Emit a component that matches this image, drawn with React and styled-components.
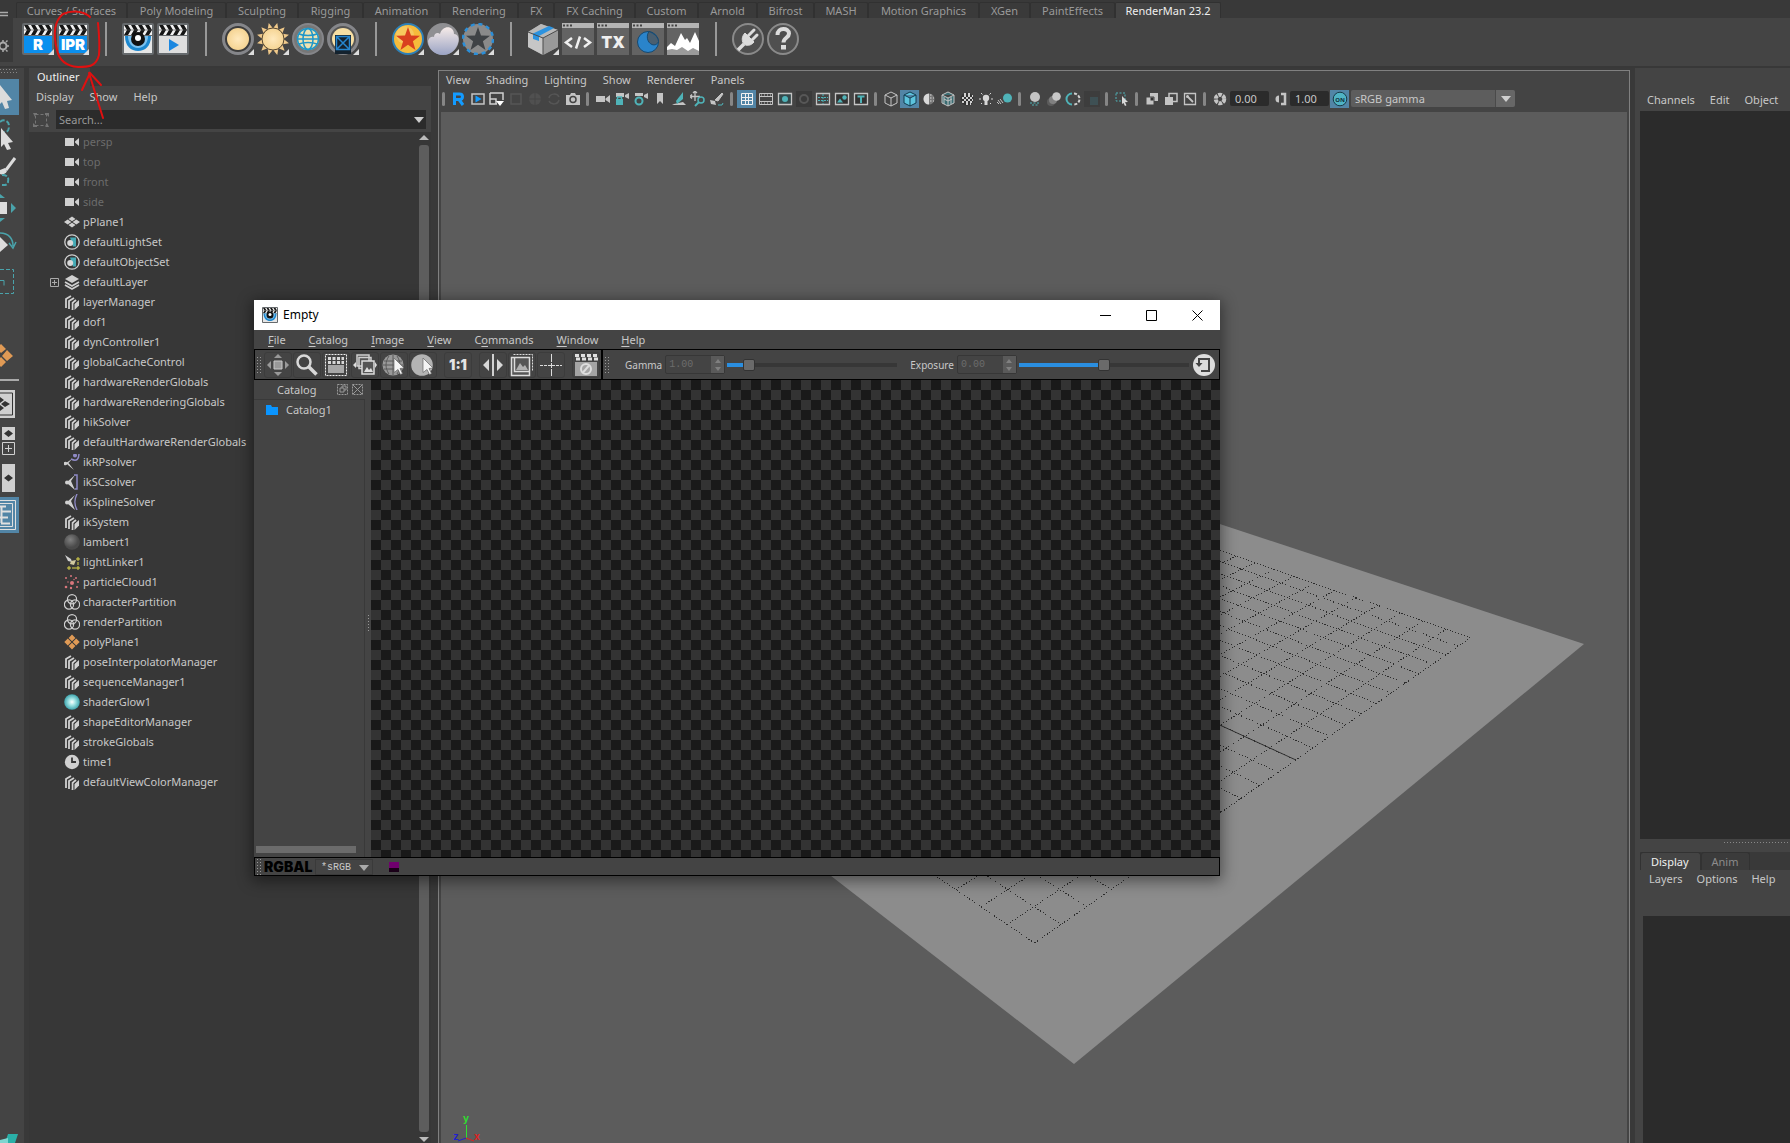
import styled, { createGlobalStyle } from "styled-components";

const GlobalStyle = createGlobalStyle`
    * {
        box-sizing: border-box;
    }

    body {
        margin: 0;
        background: #444;
        color: #c8c8c8;
        font-family: "Noto Sans", "Liberation Sans", sans-serif;
        font-size: 11px;
        line-height: 16px;
        overflow: hidden;
    }

    button, input, select {
        border: 0;
        margin: 0;
        padding: 0;
        border-radius: 0;
        background: none;
        color: inherit;
        font: inherit;
    }

    ul {
        list-style: none;
        margin: 0;
        padding: 0;
    }

    svg {
        display: block;
        flex-shrink: 0;
    }
`

/* ---------- data ---------- */

const shelfTabs = [
    { name: "Curves / Surfaces", width: 111 },
    { name: "Poly Modeling", width: 99 },
    { name: "Sculpting", width: 72 },
    { name: "Rigging", width: 65 },
    { name: "Animation", width: 77 },
    { name: "Rendering", width: 78 },
    { name: "FX", width: 36 },
    { name: "FX Caching", width: 81 },
    { name: "Custom", width: 63 },
    { name: "Arnold", width: 59 },
    { name: "Bifrost", width: 57 },
    { name: "MASH", width: 54 },
    { name: "Motion Graphics", width: 111 },
    { name: "XGen", width: 51 },
    { name: "PaintEffects", width: 85 },
    { name: "RenderMan 23.2", width: 106 },
];

const nodes = [
    { name: "persp", icon: "camera", dim: true },
    { name: "top", icon: "camera", dim: true },
    { name: "front", icon: "camera", dim: true },
    { name: "side", icon: "camera", dim: true },
    { name: "pPlane1", icon: "mesh" },
    { name: "defaultLightSet", icon: "set" },
    { name: "defaultObjectSet", icon: "set" },
    { name: "defaultLayer", icon: "layer", expand: true },
    { name: "layerManager", icon: "node" },
    { name: "dof1", icon: "node" },
    { name: "dynController1", icon: "node" },
    { name: "globalCacheControl", icon: "node" },
    { name: "hardwareRenderGlobals", icon: "node" },
    { name: "hardwareRenderingGlobals", icon: "node" },
    { name: "hikSolver", icon: "node" },
    { name: "defaultHardwareRenderGlobals", icon: "node" },
    { name: "ikRPsolver", icon: "ikRp" },
    { name: "ikSCsolver", icon: "ikSc" },
    { name: "ikSplineSolver", icon: "ikSpline" },
    { name: "ikSystem", icon: "node" },
    { name: "lambert1", icon: "lambert" },
    { name: "lightLinker1", icon: "linker" },
    { name: "particleCloud1", icon: "particles" },
    { name: "characterPartition", icon: "partition" },
    { name: "renderPartition", icon: "partition" },
    { name: "polyPlane1", icon: "poly" },
    { name: "poseInterpolatorManager", icon: "node" },
    { name: "sequenceManager1", icon: "node" },
    { name: "shaderGlow1", icon: "glow" },
    { name: "shapeEditorManager", icon: "node" },
    { name: "strokeGlobals", icon: "node" },
    { name: "time1", icon: "time" },
    { name: "defaultViewColorManager", icon: "node" },
];

/* ---------- shelf icons, 32 x 32 ---------- */

const Slats = ({ y = 2, light = "#f2f2f2", dark = "#151515" }) => (
    <g>
        <rect x="2" y={ y } width="28" height="10" fill={ light } />
        { [ 1, 8, 15, 22 ].map( x => (
            <g key={ x } fill={ dark }>
                <path d={ `M${ x + 1 } ${ y }h4l3 5h-4z` } />
                <path d={ `M${ x + 4 } ${ y + 5 }h4l-3 5h-4z` } />
            </g>
        ) ) }
        <path d={ `M2 ${ y + 5 }h28` } stroke="#555" strokeWidth=".6" />
    </g>
)

const Corner = () => <path d="M32 26v6h-6z" fill="#ddd" />

const Clapper = ({ children, body }) => (
    <>
        <rect width="32" height="32" rx="2" fill="#666a6d" />
        <Slats />
        <rect x="2" y="13" width="28" height="17" fill={ body } />
        { children }
    </>
)

const AppWindow = ({ children }) => (
    <>
        <rect width="32" height="32" fill="#636363" />
        <rect width="32" height="5" fill="#b4b4b4" />
        <path d="M1 2.500h2M4.500 2.500h2M8 2.500h2" stroke="#444" strokeWidth="2" />
        { children }
    </>
)

const star = "M16 4l3 8.500 9 .3-7.100 5.500 2.600 8.700L16 21.800 8.500 27l2.600-8.700L4 12.800l9-.3z";

const shelfIcons = {
    render: (
        <>
            <Clapper body="#0a8fee">
                <text x="16" y="27" textAnchor="middle" fontSize="15" fontWeight="900" fontFamily="Inter" fill="#fff">R</text>
            </Clapper>
            <Corner />
        </>
    ),
    ipr: (
        <>
            <Clapper body="#0a8fee">
                <text x="16" y="27" textAnchor="middle" fontSize="15" fontWeight="900" fontFamily="Inter" fill="#fff">IPR</text>
            </Clapper>
            <Corner />
        </>
    ),
    it: (
        <Clapper body="#e6e6e6">
            <path d="M3 13h26c0 10-6 15-13 15S3 23 3 13z" fill="#1b87cf" />
            <path d="M6 13h20c0 7-4 12-10 12S6 20 6 13z" fill="#7cc1ee" />
            <circle cx="16" cy="16" r="7" fill="#111" />
            <circle cx="16" cy="15" r="3" fill="#fff" />
        </Clapper>
    ),
    play: (
        <Clapper body="#dedede">
            <path d="M12 16l10 6-10 6z" fill="#1b87e0" />
        </Clapper>
    ),
    light: (
        <>
            <circle cx="16" cy="16" r="14.500" fill="#3c3c3c" stroke="#85868a" strokeWidth="3" />
            <circle cx="16" cy="16" r="11" fill="url(#lamp)" />
            <Corner />
        </>
    ),
    sun: (
        <>
            { [ 0, 30, 60, 90, 120, 150, 180, 210, 240, 270, 300, 330 ].map( a => (
                <path key={ a } d="M13.500 5L16-.5 18.500 5z" fill="#f0c98a" transform={ `rotate(${ a + 15 } 16 16)` } />
            ) ) }
            <circle cx="16" cy="16" r="11" fill="url(#lamp)" stroke="#5a4a33" />
            <Corner />
        </>
    ),
    dome: (
        <>
            <circle cx="16" cy="16" r="15" fill="#777" stroke="#85868a" strokeWidth="2" />
            <circle cx="16" cy="16" r="11" fill="#efe2b0" />
            <g fill="none" stroke="#1f97c9" strokeWidth="1.500">
                <circle cx="16" cy="16" r="10.500" />
                <ellipse cx="16" cy="16" rx="5" ry="10.500" />
                <path d="M7 11c5 2 13 2 18 0M7 21c5-2 13-2 18 0M5.500 16h21" />
            </g>
        </>
    ),
    portal: (
        <>
            <circle cx="16" cy="16" r="14.500" fill="#555" stroke="#85868a" strokeWidth="3" />
            <circle cx="16" cy="16" r="11" fill="#f7dfa3" />
            <rect x="8" y="12" width="16" height="19" fill="#14222e" />
            <path d="M9.500 13.500h13v13h-13zl13 13M22.500 13.500l-13 13" fill="none" stroke="#2686cf" strokeWidth="1.500" />
            <Corner />
        </>
    ),
    star: (
        <>
            <circle cx="16" cy="16" r="15" fill="#f6bb3b" stroke="#2d80b8" strokeWidth="2" />
            <circle cx="13" cy="12" r="9" fill="#f9d276" opacity=".6" />
            <path d={ star } fill="#d9401f" />
            <Corner />
        </>
    ),
    cloud: (
        <>
            <circle cx="16" cy="16" r="16" fill="#8f8f92" />
            <path d="M1 18c1-4 4-5 6-4 0-4 4-5 6-3 2-9 14-9 14 0 4 0 5 4 4.500 7C30 26 24 32 16 32S1 26 1 18z" fill="url(#cloud)" />
            <Corner />
        </>
    ),
    gearStar: (
        <>
            <circle cx="16" cy="16" r="15" fill="#8a8a8a" stroke="#2b8fd9" strokeWidth="2.500" strokeDasharray="4 3.850" />
            <path d={ star } fill="#3f4245" />
            <Corner />
        </>
    ),
    box: (
        <>
            <path d="M1 9l13-8 17 6v17l-15 8L1 24z" fill="#9b9b9b" />
            <path d="M1 9l15 6v17L1 24z" fill="#c6c6c6" />
            <path d="M16 15l15-8v17l-15 8z" fill="#9a9a9a" />
            <path d="M1 9l13-8 17 6-15 8z" fill="#b9b9b9" />
            <path d="M6 10.500l16-7.500 5 2-15 8v5l-6-2z" fill="#2c93e0" />
            <path d="M16 15v17M1 9l15 6 15-8" fill="none" stroke="#4b4b4b" />
            <Corner />
        </>
    ),
    code: (
        <AppWindow>
            <path d="M10 15l-6 4.500 6 4.500M22 15l6 4.500-6 4.500M18 13.500l-4 12" fill="none" stroke="#f0f0f0" strokeWidth="2.500" />
        </AppWindow>
    ),
    tx: (
        <AppWindow>
            <text x="16" y="24.500" textAnchor="middle" fontSize="16" fontWeight="900" fontFamily="Inter" fill="#efefef">TX</text>
        </AppWindow>
    ),
    moon: (
        <AppWindow>
            <circle cx="16" cy="19" r="10.500" fill="#2a84cb" stroke="#174970" />
            <path d="M17 8.500c5 2 9 5 9.500 10-1 3-4 4-6.500 3-5-2-6-9-3-13z" fill="#4a5f70" stroke="#174970" />
        </AppWindow>
    ),
    graph: (
        <AppWindow>
            <path d="M0 24l4-4 4 3 6-13 4 7 2-2 3 5 5-11 4 9v12H0z" fill="#fff" />
            <path d="M0 27l5-1 5 1 5-3 6 4 5-3 6 3v4H0z" fill="#9a9a9a" />
        </AppWindow>
    ),
    plug: (
        <>
            <circle cx="16" cy="16" r="15" fill="#4f4f4f" stroke="#8a8a8a" strokeWidth="2" />
            <path d="M13 10l9 9c-3 4-8 4-10 2s-3-7 1-11z" fill="#dcdcdc" stroke="#dcdcdc" />
            <path d="M16 13l6-6M20 17l5-5" stroke="#dcdcdc" strokeWidth="3" strokeLinecap="round" />
            <path d="M12 21l-6 6" stroke="#dcdcdc" strokeWidth="3.500" />
        </>
    ),
    help: (
        <>
            <circle cx="16" cy="16" r="15" fill="#4f4f4f" stroke="#8a8a8a" strokeWidth="2" />
            <path d="M10.500 12c0-8 11.500-7.500 11.500-1.500 0 4.500-5.500 4-5.500 9" fill="none" stroke="#dcdcdc" strokeWidth="4" />
            <rect x="14" y="22" width="5" height="4.500" fill="#dcdcdc" />
        </>
    ),
};

const shelfGroups = [
    [ "render", "ipr" ],
    [ "it", "play" ],
    [ "light", "sun", "dome", "portal" ],
    [ "star", "cloud", "gearStar" ],
    [ "box", "code", "tx", "moon", "graph" ],
    [ "plug", "help" ],
];

/* ---------- outliner icons, 16 x 16 ---------- */

const nodeIcons = {
    camera: <path d="M1 4h9v8H1zM11 7.500L15 4v8l-4-3.500z" fill="#d0d0d0" />,
    mesh: <path d="M8 2.500L11.500 5 8 7.300 4.500 5zM3.700 5.500l3.700 2.500-3.700 2.500L0 8zM12.300 5.500L16 8l-3.700 2.500L8.600 8zM8 8.700l3.500 2.300L8 13.500 4.500 11z" fill="#d0d0d0" />,
    set: (
        <>
            <circle cx="8" cy="8" r="7.200" fill="none" stroke="#d0d0d0" strokeWidth="1.300" />
            <path d="M6 3.500h6v9H9z" fill="#45aab5" />
            <circle cx="6.200" cy="9" r="3" fill="#d8d8d8" />
        </>
    ),
    layer: (
        <>
            <path d="M8 1l7 4-7 4-7-4z" fill="#d0d0d0" />
            <path d="M1 8l7 4 7-4M1 11l7 4 7-4" fill="none" stroke="#d0d0d0" strokeWidth="1.700" />
        </>
    ),
    node: (
        <>
            <path d="M2 14V5l5-3M5 15V7l5-3M8.500 16V9l3.500-3" fill="none" stroke="#d0d0d0" strokeWidth="1.800" />
            <path d="M10.500 10l4.500-4v5.500L10.500 16z" fill="#d0d0d0" />
            <path d="M3.500 8v6M6.800 8v7M10 9.500l2-1.500" stroke="#373737" strokeWidth=".8" />
        </>
    ),
    ikRp: (
        <>
            <path d="M2 9l6-4-3.500 4L10 16l-6-5z" fill="#d0d0d0" />
            <circle cx="1.500" cy="9.500" r="1.800" fill="#d0d0d0" />
            <path d="M7 5c6 3 8 0 8-6" fill="none" stroke="#8f8ac6" strokeWidth="1.500" />
            <circle cx="11" cy="1.500" r="2" fill="#8f8ac6" />
        </>
    ),
    ikSc: (
        <>
            <path d="M3 8l8-7-4 6 4 9-7-6z" fill="#d0d0d0" />
            <circle cx="3" cy="8.500" r="2" fill="#d0d0d0" />
            <path d="M10 1h3v14h-2" fill="none" stroke="#8f8ac6" strokeWidth="1.500" />
        </>
    ),
    ikSpline: (
        <>
            <path d="M3 8l8-7-4 6 4 9-7-6z" fill="#d0d0d0" />
            <circle cx="3" cy="8.500" r="2" fill="#d0d0d0" />
            <path d="M13 0c-3 6-3 10 0 16" fill="none" stroke="#8f8ac6" strokeWidth="1.500" />
        </>
    ),
    lambert: <circle cx="8" cy="8" r="7.800" fill="url(#lambert)" />,
    linker: (
        <>
            <path d="M1 1l6 4 1 3-4-1z" fill="#d0d0d0" />
            <path d="M7 7l5-1-2 5-4-1z" fill="#cfc8a0" />
            <path d="M4 13h2v2H4zM13 13h2v2h-2zM13 4h2v2h-2z" fill="none" stroke="#d8d24a" />
            <path d="M8 14h4M14 8v3" stroke="#d8d24a" />
        </>
    ),
    particles: (
        <g fill="#d9767c">
            <circle cx="8" cy="9" r="2" /><circle cx="2" cy="4" r="1" /><circle cx="7" cy="2" r="1" />
            <circle cx="12" cy="4" r="1" /><circle cx="2" cy="13" r="1.300" /><circle cx="14" cy="8" r="1" />
            <circle cx="13" cy="13" r="1" /><circle cx="7" cy="14" r="1.200" /><circle cx="4" cy="8" r=".7" /><circle cx="10" cy="5.500" r=".7" />
        </g>
    ),
    partition: (
        <g fill="none" stroke="#d0d0d0" strokeWidth="1.200">
            <circle cx="8" cy="5.200" r="4.600" /><circle cx="5" cy="10.500" r="4.600" /><circle cx="11" cy="10.500" r="4.600" />
        </g>
    ),
    poly: <path d="M8 .5l3.400 3.400L8 7.300 4.600 3.900zM3.800 4.600l3.500 3.400-3.500 3.500L.3 8zM12.200 4.600L15.700 8l-3.500 3.500L8.700 8zM8 8.700l3.400 3.400L8 15.500l-3.400-3.400z" fill="#e09a55" />,
    glow: <circle cx="8" cy="8" r="7.800" fill="url(#glow)" />,
    time: (
        <>
            <circle cx="8" cy="8" r="7.200" fill="#d0d0d0" />
            <path d="M8 3.500V8h4" fill="none" stroke="#373737" strokeWidth="1.800" />
        </>
    ),
};

/* ---------- viewport toolbar icons, 16 x 16 ---------- */

const cube = "M8 1l6 3v8l-6 3-6-3V4zM2 4l6 3 6-3M8 7v8";

const viewIcons = {
    r: <path d="M3.500 14V3h5c4 0 4 5.500 0 5.500H4M8 8.500l4 5.500" fill="none" stroke="#139bff" strokeWidth="3" />,
    playBox: <><path d="M2 3h12v10H2z" fill="none" stroke="#c4c4c4" strokeWidth="1.500" /><path d="M5.500 4.500l6 3.500-6 3.500z" fill="#139bff" /></>,
    layout: <><path d="M1 2h13v7M1 2v11h7M1 8h6v5" fill="none" stroke="#d0d0d0" strokeWidth="1.500" /><path d="M7 10h8l-4 5z" fill="#fff" /></>,
    dimCrop: <path d="M3 3h10v10H3z" fill="none" stroke="#565656" strokeWidth="1.500" />,
    dimGlobe: <><circle cx="8" cy="8" r="6" fill="#505050" /><path d="M2 8h12M8 2v12" stroke="#444" /></>,
    dimSync: <path d="M3 7c1-5 8-5 10-1M13 9c-1 5-8 5-10 1" fill="none" stroke="#565656" strokeWidth="1.500" />,
    photo: <><path d="M1 4h4l1-2h4l1 2h4v10H1z" fill="#c4c4c4" /><circle cx="8" cy="8.500" r="3" fill="#c4c4c4" stroke="#444" strokeWidth="1.500" /></>,
    cam: <path d="M1 5h9v6H1zM10.500 7.500L15 4v8l-4.500-3z" fill="#c4c4c4" />,
    camLock: <><path d="M2 2h8v4H2zM11 4l4-2v6l-4-2z" fill="#c4c4c4" /><path d="M2 8h7v6H2z" fill="#4fb3b8" /><path d="M3.500 8V6h4v2" fill="none" stroke="#4fb3b8" strokeWidth="1.500" /></>,
    camGear: <><path d="M2 2h8v3H2zM11 4l4-2v6l-4-2z" fill="#c4c4c4" /><circle cx="6" cy="10" r="3.500" fill="none" stroke="#4fb3b8" strokeWidth="2" /></>,
    mark: <path d="M5 2h6v11L8 10l-3 3z" fill="#c4c4c4" />,
    plane: <><path d="M3 13l9-2 3 3H1z" fill="#c4c4c4" /><path d="M5 10l7-9v7l-6 5z" fill="#4fb3b8" /></>,
    panZoom: <><path d="M5 1v9M1 5.500h9M5 0l2 2M5 0L3 2M0 5.500l2-2M0 5.500l2 2" stroke="#c4c4c4" strokeWidth="1.300" fill="none" /><circle cx="11" cy="9" r="3" fill="#444" stroke="#4fb3b8" strokeWidth="1.500" /><path d="M9 11l-4 4" stroke="#4fb3b8" strokeWidth="2" /></>,
    pencil: <><path d="M13 2l1 1-5 7-3-1z" fill="#c4c4c4" stroke="#c4c4c4" /><path d="M1 9l5 1 1 4-5-1z" fill="#c4c4c4" /><path d="M9 14h4l1-2" stroke="#4fb3b8" fill="none" /></>,
    grid: <path d="M2.500 2.500h11v11h-11zM2.500 6.500h11M2.500 9.500h11M6.500 2.500v11M9.500 2.500v11" fill="none" stroke="#f0f0f0" />,
    film: <><path d="M1.500 2.500h13v11h-13zM1.500 5.500h13M1.500 10.500h13" fill="none" stroke="#c4c4c4" /><path d="M3 4h10M3 12h10" stroke="#c4c4c4" strokeDasharray="1 2" /></>,
    gate: <><path d="M1.500 2.500h13v11h-13z" fill="#34494b" stroke="#c4c4c4" strokeWidth="1.300" /><circle cx="8" cy="8" r="3" fill="#4fb3b8" /></>,
    dimGate: <><rect width="16" height="16" fill="#3a3a3a" /><circle cx="8" cy="8" r="4" fill="none" stroke="#575757" strokeWidth="2" /></>,
    chart: <><path d="M1.500 2.500h13v11h-13z" fill="none" stroke="#c4c4c4" strokeWidth="1.300" /><path d="M3 6.500h10M3 9.500h10M8 3v10" stroke="#4fb3b8" strokeDasharray="2 1" /></>,
    safe: <><path d="M1.500 2.500h13v11h-13z" fill="#333" stroke="#c4c4c4" strokeWidth="1.300" /><path d="M3 11.500l3-4 3 4z" fill="#4fb3b8" /><circle cx="10.500" cy="6.500" r="2.200" fill="#4fb3b8" /></>,
    title: <><path d="M1.500 2.500h13v11h-13z" fill="#333" stroke="#c4c4c4" strokeWidth="1.300" /><path d="M4.500 5.500h7M8 6v6" stroke="#4fb3b8" strokeWidth="2" /></>,
    wire: <path d={ cube } fill="none" stroke="#c4c4c4" />,
    shaded: <path d={ cube } fill="#5cc3dd" stroke="#123d50" />,
    half: <><circle cx="8" cy="8" r="5.500" fill="#777" /><path d="M8 2.500a5.500 5.500 0 0 0 0 11z" fill="#d8d8d8" /><path d="M9 4h3M9 7h4M9 10h4" stroke="#d8d8d8" strokeDasharray="1.500 1.500" /></>,
    texCube: <><path d={ cube } fill="#3a6c72" stroke="#c4c4c4" /><path d="M4 6v7M11 6v7M4 8l4 2 4-2" stroke="#c4c4c4" fill="none" /></>,
    checker: (
        <g stroke="#d0d0d0" strokeWidth="2" strokeDasharray="2 2">
            <circle cx="8" cy="8" r="6.500" fill="#333" stroke="none" />
            <path d="M5 3h8M3 7h12M5 11h8M3 5h12M3 9h12M7 13h4" strokeDashoffset="0" opacity="0" />
            <path d="M5 3h7M3 7h11M3 11h11" />
            <path d="M3 5h11M3 9h11M5 13h7" strokeDashoffset="2" />
        </g>
    ),
    bulb: <><circle cx="8" cy="7" r="3.200" fill="#d8d8d8" /><path d="M6.500 9h3v5h-3z" fill="#d8d8d8" /><path d="M1 8h2M13 8h2M3 2l1.500 1.500M13 2l-1.500 1.500M3 13l1-1M13 13l-1-1" stroke="#d8d8d8" /></>,
    motion: <><circle cx="10.500" cy="7" r="4.500" fill="#4fb3b8" /><path d="M1 9l3 4M3 8l3 4M0 11l2 2" stroke="#c4c4c4" /></>,
    ao: <><circle cx="8" cy="6" r="5" fill="#c4c4c4" /><path d="M3 12h10M5 14h7" stroke="#4fb3b8" strokeDasharray="2 1.500" /></>,
    blur: <><circle cx="5" cy="11" r="4" fill="#5c5c5c" /><circle cx="7" cy="9" r="4" fill="#808080" /><circle cx="10.500" cy="5.500" r="4.300" fill="#c8c8c8" /></>,
    aa: <><path d="M7 2.500a5.500 5.500 0 0 0 0 11" fill="none" stroke="#4fb3b8" strokeWidth="2" /><path d="M9 2.500a5.500 5.500 0 0 1 0 11" fill="none" stroke="#d0d0d0" strokeWidth="2" strokeDasharray="3 1.500" /></>,
    dimXray: <><rect width="16" height="16" fill="#3d3d3d" /><rect x="6" y="6" width="8" height="8" fill="#3e5054" /></>,
    isolate: <><path d="M2 2h9v8H2z" fill="none" stroke="#4fb3b8" strokeDasharray="2 1.500" /><path d="M8 5l6 6-3 .3 1.500 3-1.500.7-1.500-3L8 13z" fill="#d8d8d8" /></>,
    front: <><path d="M6 2h8v8H6z" fill="#c4c4c4" /><path d="M2 6h8v8H2z" fill="#c4c4c4" stroke="#444" /><path d="M6.500 6.500h3v3h-3z" fill="#333" /></>,
    back: <><path d="M6 2.500h8v8H6z" fill="none" stroke="#c4c4c4" strokeWidth="1.500" /><path d="M2 6h8v8H2z" fill="#c4c4c4" /></>,
    pick: <><path d="M2.500 2.500h11v11h-11z" fill="none" stroke="#c4c4c4" strokeWidth="1.300" /><path d="M5 5l6 6" stroke="#c4c4c4" strokeWidth="1.800" /><circle cx="5.500" cy="5.500" r="1.500" fill="#c4c4c4" /></>,
    aperture: <><circle cx="8" cy="8" r="4.300" fill="none" stroke="#c4c4c4" strokeWidth="4" strokeDasharray="3.600 .9" /></>,
    contrast: <><path d="M9 3h4v10H9" fill="none" stroke="#c4c4c4" strokeWidth="2.500" /><path d="M7 4.500a3.500 3.500 0 0 0 0 7z" fill="#c4c4c4" /></>,
};

const viewGroups = [
    [ "r", "playBox", "layout", "dimCrop", "dimGlobe", "dimSync", "photo" ],
    [ "cam", "camLock", "camGear", "mark", "plane", "panZoom", "pencil" ],
    [ "grid", "film", "gate", "dimGate", "chart", "safe", "title" ],
    [ "wire", "shaded", "half", "texCube", "checker", "bulb", "motion" ],
    [ "ao", "blur", "aa", "dimXray" ],
    [ "isolate" ],
    [ "front", "back", "pick" ],
];

/* ---------- render window icons, 24 x 24 ---------- */

const cursor = <path d="M12 5l10 10-4 .5 2.500 5-2 1-2.500-5-4 3z" fill="#f4f4f4" stroke="#666" strokeWidth=".7" />;

const itIcons = {
    pan: <><path d="M8 8h8v8H8z" fill="#999" stroke="#c9c9c9" /><path d="M12 1l4 4H8zM12 23l4-4H8zM1 12l4-4v8zM23 12l-4-4v8z" fill="#999" /></>,
    zoom: <><circle cx="9" cy="9" r="6.500" fill="none" stroke="#d8d8d8" strokeWidth="2.500" /><path d="M13.500 13.500l8 8" stroke="#d8d8d8" strokeWidth="3.500" /></>,
    crop: <><path d="M1.500 1.500h21v21h-21z" fill="none" stroke="#eee" strokeDasharray="2 1" /><path d="M4 12h16v8H4z" fill="#a8a8a8" /><path d="M4 9.500h16M4 5.500h16" stroke="#d8d8d8" strokeWidth="3" strokeDasharray="3 1.500" /></>,
    images: <><path d="M4 2h12v11H4zM6 4.500h12v11H6z" fill="#555" stroke="#cfcfcf" strokeWidth="1.500" /><path d="M9 8h12v13H9z" fill="#555" stroke="#dcdcdc" strokeWidth="1.500" /><path d="M11 19l3-5 2 3 2-2 2 4z" fill="#ddd" /><path d="M0 12l3-3v6zM24 12l-2-3v6z" fill="#ddd" /></>,
    globe: <><circle cx="11" cy="12" r="10.500" fill="#999" /><path d="M2 8h18M1 12h20M2 16h18M11 2v20M7 3c-4 6-4 12 0 18M15 3c4 6 4 12 0 18" fill="none" stroke="#5a5a5a" />{ cursor }</>,
    sphere: <><circle cx="11" cy="12" r="10.800" fill="#b4b4b4" />{ cursor }</>,
    compare: <><path d="M12 1v22" stroke="#e0e0e0" strokeWidth="1.800" /><path d="M8 6v12l-6-6zM16 6v12l6-6z" fill="#d8d8d8" /></>,
    frame: <><path d="M3.500 1.500h19v17" fill="none" stroke="#ddd" strokeDasharray="2 1" /><path d="M1.500 4.500h18v18h-18zM4.500 4.500h15v14h-15z" fill="#555" stroke="#ddd" strokeWidth="1.500" /><path d="M6 17l4-7 3 4 2-2 3 5z" fill="#b0b0b0" /></>,
    cross: <><path d="M12.500 1v22" stroke="#ddd" strokeDasharray="8 1 5 1" /><path d="M1 12.500h22" stroke="#ddd" strokeDasharray="3 1" /></>,
    stop: <><path d="M1 9h22v14H1z" fill="#a4a4a4" /><path d="M1 2.500h22M2 6h22" stroke="#e0e0e0" strokeWidth="3" strokeDasharray="4 2" /><circle cx="12" cy="16" r="5" fill="none" stroke="#ddd" strokeWidth="2" /><path d="M9 19.500l6-7" stroke="#ddd" strokeWidth="2" /></>,
};

/* ---------- perspective grid ---------- */

// s runs away from the right edge, t runs towards the bottom corner, both 0..24
const project = ( s, t ) => {
    const w = 1 + 0.0135 * s - 0.01383 * t;
    return [ ( 1470.4 - 4.6 * s - 32.47 * t ) / w, ( 637.6 + 0.11 * s - 0.314 * t ) / w ];
}

const gridLine = ( from, to ) => `M${ project( ...from ).join( " " ) }L${ project( ...to ).join( " " ) }`;

const steps = Array.from( { length: 25 }, ( _, i ) => i );

const Scene = () => (
    <SceneSvg viewBox="441 112 1186 1031" preserveAspectRatio="xMinYMin slice">
        <path d="M1584 644L1074 1064 600 697 1050 468z" fill="#8c8c8c" />
        <g stroke="#2c2c2c" strokeWidth="1" strokeDasharray="1 2" shapeRendering="crispEdges">
            { steps.map( i => <path key={ `s${ i }` } d={ gridLine( [ i, 0 ], [ i, 24 ] ) } /> ) }
            { steps.map( i => <path key={ `t${ i }` } d={ gridLine( [ 0, i ], [ 24, i ] ) } /> ) }
        </g>
        <path d={ gridLine( [ 0, 12 ], [ 24, 12 ] ) } stroke="#333" strokeWidth="1" />
        <path d="M466.500 1138v-13" stroke="#2fe02f" />
        <path d="M466 1138l-8 3" stroke="#2020d0" />
        <path d="M466 1138l8 3" stroke="#e02020" />
        <g fontFamily="Liberation Mono" fontSize="10" fontWeight="700">
            <text x="463" y="1122" fill="#2fe02f">y</text>
            <text x="453" y="1140" fill="#2020d0">z</text>
            <text x="474" y="1140" fill="#e02020">x</text>
        </g>
    </SceneSvg>
)

/* ---------- parts ---------- */

const Defs = () => (
    <HiddenSvg aria-hidden="true">
        <defs>
            <radialGradient id="lamp"><stop offset="0" stopColor="#ffe9bd" /><stop offset="1" stopColor="#f5d493" /></radialGradient>
            <radialGradient id="glow"><stop offset="0" stopColor="#fff" /><stop offset=".4" stopColor="#a5e6e6" /><stop offset="1" stopColor="#3fa5ae" /></radialGradient>
            <radialGradient id="lambert" cx=".4" cy=".35"><stop offset="0" stopColor="#808080" /><stop offset="1" stopColor="#4a4a4a" /></radialGradient>
            <linearGradient id="cloud" x2="0" y2="1"><stop offset="0" stopColor="#f6ebe8" /><stop offset="1" stopColor="#9aa3c4" /></linearGradient>
        </defs>
    </HiddenSvg>
)

const Shelf = () => (
    <ShelfBar>
        <ShelfMenu>
            <svg width="12" height="62" viewBox="0 0 12 62">
                <path d="M0 12.500h8M0 15.500h8" stroke="#aaa" strokeWidth="1.500" />
                <circle cx="3" cy="46" r="3.500" fill="none" stroke="#aaa" strokeWidth="2" />
                <path d="M3 40v2M3 50v2M7 46h2M6 42l1.500-1.500M6 50l1.500 1.500" stroke="#aaa" strokeWidth="1.500" />
            </svg>
        </ShelfMenu>
        <ShelfMain>
            <TabRow>
                { shelfTabs.map( ( tab, i ) => (
                    <ShelfTab key={ tab.name } $width={ tab.width } $active={ i === shelfTabs.length - 1 }>{ tab.name }</ShelfTab>
                ) ) }
            </TabRow>
            <ShelfIcons>
                { shelfGroups.map( group => (
                    <ShelfGroup key={ group[ 0 ] }>
                        { group.map( name => (
                            <button key={ name } aria-label={ name }>
                                <svg width="32" height="32" viewBox="0 0 32 32">{ shelfIcons[ name ] }</svg>
                            </button>
                        ) ) }
                    </ShelfGroup>
                ) ) }
            </ShelfIcons>
        </ShelfMain>
    </ShelfBar>
)

const Tools = () => (
    <Toolbox>
        <svg width="24" height="1075" viewBox="0 68 24 1075">
            <path d="M0 69.500h18M1 72.500h18" stroke="#888" strokeDasharray="1 2" />
            <rect y="79" width="19" height="36" fill="#5285a6" />
            <path d="M0 85l12 15-5 1 2 7-4 1-3-7-2 2z" fill="#dcdcdc" />
            <path d="M0 122c3-3 9-2 9 4s-3 6-5 6" fill="none" stroke="#4aa3ab" strokeWidth="2" strokeDasharray="5 2" />
            <path d="M1 128l12 14-5 1 3 6-4 1-3-6-3 3z" fill="#dcdcdc" />
            <path d="M15 158l-9 12" stroke="#dcdcdc" strokeWidth="3" />
            <path d="M0 170l5-2 2 3c-1 3-5 4-7 3z" fill="#dcdcdc" />
            <path d="M2 175c6 0 7 3 6 7s-4 3-8 3" fill="none" stroke="#4aa3ab" strokeWidth="2" strokeDasharray="5 2" />
            <path d="M0 202h7v12H0z" fill="#dcdcdc" />
            <path d="M11 203l5 5-5 5zM0 194l5 4H0zM0 222l5-4H0z" fill="#4aa3ab" />
            <path d="M0 237l8 8-8 7z" fill="#dcdcdc" />
            <path d="M0 233c9 0 13 6 13 13M9 243l4 5 3-6" fill="none" stroke="#4aa3ab" strokeWidth="1.500" />
            <path d="M0 269.500h13.500v24H0" fill="none" stroke="#4aa3ab" strokeDasharray="4 2" />
            <path d="M0 280.500h4v5" fill="none" stroke="#4aa3ab" />
            <path d="M1 344l5 5-5 4-1-1v-7zM7 350l6 6-6 5-5-5zM1 357l5 5-5 5-1-1v-8z" fill="#e09a55" />
            <path d="M0 380h19" stroke="#aaa" strokeWidth="2" />
            <path d="M0 390h15v28H0z" fill="#d0d0d0" />
            <path d="M0 393h12.500v22H0" fill="none" stroke="#333" />
            <path d="M0 397l4 3-4 3zM5 401l5 3-5 3-4-3zM0 405l4 3-4 3z" fill="#333" />
            <path d="M2 427h13v13H2zM2 464h13v28H2z" fill="#d0d0d0" />
            <path d="M4 433.500l4.500-3.500 4.500 3.500-4.500 3.500zM4 478l4.500-3.500L13 478l-4.500 3.500z" fill="#333" />
            <path d="M2.500 442.500h12v12h-12zM8.500 445v7M5 448.500h7" fill="none" stroke="#d0d0d0" />
            <rect y="497" width="19" height="36" fill="#5285a6" />
            <path d="M0 500.500h15.500v29H0M0 503.500h12.500v23H0" fill="none" stroke="#e0e0e0" />
            <path d="M0 506.500h6M1 511.500h10M0 517.500h8M1 523.500h9M1.500 507v16" fill="none" stroke="#e0e0e0" strokeWidth="2" />
            <path d="M8 1134h10l-3 9H5z" fill="#2ab0a8" />
            <path d="M0 1140l8-2v5H0z" fill="#7fd6d0" />
        </svg>
    </Toolbox>
)

const Outliner = () => (
    <OutlinerPanel>
        <PanelTabs><PanelTab $active>Outliner</PanelTab></PanelTabs>
        <MenuRow $height={ 21 }>
            <button>Display</button>
            <button>Show</button>
            <button>Help</button>
        </MenuRow>
        <SearchRow>
            <svg width="16" height="16" viewBox="0 0 16 16">
                <path d="M2.500 2.500h11v11h-11z" fill="none" stroke="#757575" strokeDasharray="3 2" />
                <path d="M0 1h4v2H2v2zM16 1v4l-2-2h-2V1zM0 15v-4l2 2h2v2zM16 15h-4l2-2v-2z" fill="#757575" />
            </svg>
            <SearchBox type="text" placeholder="Search..." aria-label="Search nodes" />
            <DropButton aria-label="Search filters">
                <svg width="12" height="6" viewBox="0 0 12 6"><path d="M1 0h10L6 6z" fill="#ccc" /></svg>
            </DropButton>
        </SearchRow>
        <TreeArea>
            <Tree>
                { nodes.map( node => (
                    <TreeRow key={ node.name } $dim={ node.dim }>
                        <Expander>
                            { node.expand && (
                                <svg width="9" height="9" viewBox="0 0 9 9"><path d="M.5.5h8v8h-8zM2 4.500h5M4.500 2v5" fill="none" stroke="#aaa" /></svg>
                            ) }
                        </Expander>
                        <svg width="16" height="16" viewBox="0 0 16 16">{ nodeIcons[ node.icon ] }</svg>
                        { node.name }
                    </TreeRow>
                ) ) }
            </Tree>
            <TreeScroll>
                <svg width="10" height="5" viewBox="0 0 10 5"><path d="M0 5h10L5 0z" fill="#bbb" /></svg>
                <ScrollThumb />
                <svg width="10" height="5" viewBox="0 0 10 5"><path d="M0 0h10L5 5z" fill="#bbb" /></svg>
            </TreeScroll>
        </TreeArea>
    </OutlinerPanel>
)

const Viewport = () => (
    <ViewPanel>
        <MenuRow $height={ 17 }>
            { [ "View", "Shading", "Lighting", "Show", "Renderer", "Panels" ].map( item => <button key={ item }>{ item }</button> ) }
        </MenuRow>
        <ViewTools>
            { viewGroups.map( group => (
                <ViewGroup key={ group[ 0 ] }>
                    <ViewGrip />
                    { group.map( name => (
                        <ViewButton key={ name } aria-label={ name } $on={ name === "grid" || name === "shaded" }>
                            <svg width="16" height="16" viewBox="0 0 16 16">{ viewIcons[ name ] }</svg>
                        </ViewButton>
                    ) ) }
                </ViewGroup>
            ) ) }
            <ViewGrip />
            <ViewButton aria-label="Exposure"><svg width="16" height="16" viewBox="0 0 16 16">{ viewIcons.aperture }</svg></ViewButton>
            <ViewField type="text" defaultValue="0.00" aria-label="Exposure value" />
            <ViewButton aria-label="Gamma"><svg width="16" height="16" viewBox="0 0 16 16">{ viewIcons.contrast }</svg></ViewButton>
            <ViewField type="text" defaultValue="1.00" aria-label="Gamma value" />
            <ViewButton aria-label="Colour management" $on>
                <svg width="16" height="16" viewBox="0 0 16 16">
                    <circle cx="8" cy="8" r="6.800" fill="#4fb3c4" stroke="#173a48" />
                    <text x="8" y="10.500" textAnchor="middle" fontSize="6" fontWeight="700" fill="#10313e">ON</text>
                </svg>
            </ViewButton>
            <SelectWrap $width={ 166 }>
                <ViewSelect aria-label="View transform"><option>sRGB gamma</option></ViewSelect>
                <svg width="10" height="6" viewBox="0 0 10 6"><path d="M0 0h10L5 6z" fill="#d0d0d0" /></svg>
            </SelectWrap>
        </ViewTools>
        <SceneArea><Scene /></SceneArea>
    </ViewPanel>
)

const Channels = () => (
    <ChannelPanel>
        <ChannelMenu>
            <button>Channels</button>
            <button>Edit</button>
            <button>Object</button>
        </ChannelMenu>
        <ChannelBox />
        <Handle />
        <LayerTabs>
            <PanelTab $active>Display</PanelTab>
            <PanelTab>Anim</PanelTab>
        </LayerTabs>
        <LayerMenu>
            <button>Layers</button>
            <button>Options</button>
            <button>Help</button>
        </LayerMenu>
        <LayerBox />
    </ChannelPanel>
)

const Level = ({ id, label, value, percent }) => (
    <>
        <LevelLabel htmlFor={ id }>{ label }</LevelLabel>
        <Spin>
            <input id={ id } type="text" defaultValue={ value } />
            <button aria-label={ `${ label } step` }>
                <svg width="8" height="14" viewBox="0 0 8 14"><path d="M1 5l3-4 3 4zM1 9l3 4 3-4z" fill="#808080" /></svg>
            </button>
        </Spin>
        <Slider type="range" aria-label={ `${ label } slider` } defaultValue={ percent } $fill={ percent } />
    </>
)

const ItButton = ({ name }) => (
    <ItTool aria-label={ name }>
        <svg width="24" height="24" viewBox="0 0 24 24">{ itIcons[ name ] }</svg>
    </ItTool>
)

const RenderWindow = () => (
    <WindowFrame>
        <TitleBar>
            <svg width="16" height="16" viewBox="0 0 32 32">{ shelfIcons.it }</svg>
            <span>Empty</span>
            <WindowButton aria-label="Minimize"><svg width="11" height="11" viewBox="0 0 11 11"><path d="M0 5.500h11" stroke="#000" /></svg></WindowButton>
            <WindowButton aria-label="Maximize"><svg width="11" height="11" viewBox="0 0 11 11"><path d="M.5.5h10v10H.5z" fill="none" stroke="#000" /></svg></WindowButton>
            <WindowButton aria-label="Close"><svg width="11" height="11" viewBox="0 0 11 11"><path d="M.5.5l10 10M10.500.5l-10 10" stroke="#000" /></svg></WindowButton>
        </TitleBar>
        <WindowMenu>
            <button><u>F</u>ile</button>
            <button><u>C</u>atalog</button>
            <button><u>I</u>mage</button>
            <button><u>V</u>iew</button>
            <button>C<u>o</u>mmands</button>
            <button><u>W</u>indow</button>
            <button><u>H</u>elp</button>
        </WindowMenu>
        <WindowTools>
            <ToolSection>
                <Grip />
                { [ "pan", "zoom", "crop", "images", "globe", "sphere" ].map( name => <ItButton key={ name } name={ name } /> ) }
                <ToolGap />
                <ItTool>1:1</ItTool>
                <ToolGap />
                { [ "compare", "frame", "cross" ].map( name => <ItButton key={ name } name={ name } /> ) }
                <ToolGap />
                <ItButton name="stop" />
            </ToolSection>
            <ToolSection $grow>
                <Grip />
                <Level id="gamma" label="Gamma" value="1.00" percent={ 10 } />
                <Level id="exposure" label="Exposure" value="0.00" percent={ 50 } />
                <ResetButton aria-label="Reset">
                    <svg width="24" height="24" viewBox="0 0 24 24">
                        <circle cx="12" cy="12" r="11" fill="#ddd" />
                        <path d="M7 11V6h10v12H9" fill="none" stroke="#444" strokeWidth="2" />
                        <path d="M3.500 10h7L7 14z" fill="#444" />
                    </svg>
                </ResetButton>
            </ToolSection>
        </WindowTools>
        <WindowBody>
            <CatalogDock>
                <CatalogHead>
                    <span>Catalog</span>
                    <svg width="26" height="11" viewBox="0 0 26 11">
                        <path d="M.5.5h10v10H.5zM15.500.5h10v10h-10z" fill="none" stroke="#999" strokeDasharray="2 1" />
                        <path d="M3 4h4v4H3zM5 4V2h4v4H7M16 1l9 9M25 1l-9 9" fill="none" stroke="#999" />
                    </svg>
                </CatalogHead>
                <CatalogList>
                    <CatalogItem>
                        <svg width="12" height="10" viewBox="0 0 12 10"><path d="M0 0h5l1 2h6v8H0z" fill="#0a95ff" /></svg>
                        Catalog1
                    </CatalogItem>
                    <CatalogScroll />
                </CatalogList>
                <DockHandle />
            </CatalogDock>
            <Checkerboard />
        </WindowBody>
        <StatusBar>
            <Grip />
            <Channel>RGBAL</Channel>
            <SelectWrap $width={ 58 }>
                <StatusSelect aria-label="Display profile"><option>*sRGB</option></StatusSelect>
                <svg width="10" height="6" viewBox="0 0 10 6"><path d="M0 0h10L5 6z" fill="#aaa" /></svg>
            </SelectWrap>
            <Swatch />
        </StatusBar>
    </WindowFrame>
)

const App = () => (
    <Page>
        <GlobalStyle />
        <Defs />
        <Shelf />
        <Workspace>
            <Tools />
            <Outliner />
            <Viewport />
            <Channels />
        </Workspace>
        <RenderWindow />
        <Scribble width="120" height="122" viewBox="0 0 120 122">
            <path d="M90 17C84 11 72 10 63 14c-10 8-9 24-6 36 2 10 9 16 21 17 10 0 18 0 21-12 1-12 0-22-1-32" />
            <path d="M103 118L89 73M82 90l8-17 11 12" />
        </Scribble>
    </Page>
)

/* ---------- styles ---------- */

const Page = styled.div`
    position: relative;
    display: flex;
    flex-direction: column;
    height: 100vh;
    overflow: hidden;
`
const HiddenSvg = styled.svg`
    position: absolute;
    width: 0;
    height: 0;
`
const ShelfBar = styled.header`
    display: flex;
    height: 68px;
    border-bottom: 2px solid #383838;
`
const ShelfMenu = styled.div`
    width: 13px;
    height: 62px;
    background: #393939;
`
const ShelfMain = styled.div`
    flex: 1;
    min-width: 0;
`
const TabRow = styled.div`
    display: flex;
    height: 18px;
    padding: 2px 0 0 3px;
    background: #393939;
`
const ShelfTab = styled.button`
    flex: none;
    width: ${ p => p.$width }px;
    height: 16px;
    border: 1px solid #313131;
    border-width: 1px 1px 0;
    border-radius: 2px 2px 0 0;
    background: ${ p => p.$active ? "#444" : "#3a3a3a" };
    color: ${ p => p.$active ? "#eee" : "#999" };
    white-space: nowrap;
`
const ShelfIcons = styled.div`
    display: flex;
    padding: 4px 9px;
`
const ShelfGroup = styled.div`
    display: flex;
    align-items: center;
    gap: 3px;
    height: 34px;

    &:not(:first-of-type) {
        margin-left: 16px;
        padding-left: 15px;
        border-left: 2px solid #999;
    }
`
const Workspace = styled.main`
    display: flex;
    flex: 1;
    min-height: 0;
    background: #393939;
`
const Toolbox = styled.nav`
    width: 24px;
    margin-right: 5px;
    background: #444;
    overflow: hidden;
`
const OutlinerPanel = styled.section`
    display: flex;
    flex-direction: column;
    width: 402px;
    margin-right: 4px;
    background: #444;
`
const PanelTabs = styled.div`
    display: flex;
    height: 18px;
    background: #393939;
`
const PanelTab = styled.button`
    padding: 0 10px 0 8px;
    height: 18px;
    background: ${ p => p.$active ? "#444" : "#3b3b3b" };
    color: ${ p => p.$active ? "#f0f0f0" : "#8c8c8c" };
`
const MenuRow = styled.div`
    display: flex;
    align-items: center;
    gap: 16px;
    height: ${ p => p.$height }px;
    padding: 0 7px;
`
const SearchRow = styled.div`
    display: flex;
    align-items: center;
    height: 25px;
    padding: 0 5px 0 4px;
    gap: 7px;
`
const SearchBox = styled.input`
    flex: 1;
    min-width: 0;
    height: 19px;
    padding: 0 3px;
    background: #2b2b2b;

    &::placeholder {
        color: #999;
    }
`
const DropButton = styled.button`
    height: 19px;
    margin-left: -7px;
    padding: 0 1px;
    background: #2b2b2b;
`
const TreeArea = styled.div`
    display: flex;
    flex: 1;
    min-height: 0;
    background: #373737;
`
const Tree = styled.ul`
    flex: 1;
    overflow: hidden;
`
const TreeRow = styled.li`
    display: flex;
    align-items: center;
    gap: 3px;
    height: 20px;
    padding-left: 21px;
    color: ${ p => p.$dim ? "#6c6c6c" : "#c8c8c8" };
`
const Expander = styled.span`
    width: 11px;
`
const TreeScroll = styled.div`
    display: flex;
    flex-direction: column;
    align-items: center;
    gap: 5px;
    width: 14px;
    padding: 3px 0 1px;
`
const ScrollThumb = styled.div`
    flex: 1;
    width: 10px;
    border-radius: 3px;
    background: #5d5d5d;
`
const ViewPanel = styled.section`
    display: flex;
    flex-direction: column;
    flex: 1;
    min-width: 0;
    margin: 2px 5px 0 3px;
    border: 1px solid #808080;
    border-bottom: 0;
    background: #444;
`
const ViewTools = styled.div`
    display: flex;
    align-items: center;
    height: 21px;
`
const ViewGroup = styled.div`
    display: flex;
    align-items: center;
`
const ViewGrip = styled.span`
    width: 3px;
    height: 14px;
    margin: 0 4px;
    border-radius: 2px;
    background: #868686;

    ${ ViewGroup }:first-of-type > & {
        margin-left: 3px;
    }
`
const ViewButton = styled.button`
    display: flex;
    align-items: center;
    justify-content: center;
    width: 19px;
    height: 18px;
    background: ${ p => p.$on ? "#5285a6" : "none" };
`
const ViewField = styled.input`
    width: 39px;
    height: 15px;
    margin: 0 1px;
    padding: 0 5px;
    border-radius: 2px;
    background: #2b2b2b;
`
const SelectWrap = styled.div`
    position: relative;
    display: flex;
    width: ${ p => p.$width }px;

    & svg {
        position: absolute;
        right: 4px;
        top: 6px;
        pointer-events: none;
    }
`
const ViewSelect = styled.select`
    appearance: none;
    width: 100%;
    height: 17px;
    margin-left: 2px;
    padding: 0 4px;
    border-radius: 2px;
    background: linear-gradient(to left, #676767 19px, #4a4a4a 19px, #4a4a4a 20px, #5d5d5d 20px);
`
const SceneArea = styled.div`
    flex: 1;
    min-height: 0;
    margin: 3px 2px 0;
    background: #5c5c5c;
    overflow: hidden;
`
const SceneSvg = styled.svg`
    width: 100%;
    height: 100%;
`
const ChannelPanel = styled.aside`
    display: flex;
    flex-direction: column;
    width: 155px;
    background: #444;
    white-space: nowrap;
`
const ChannelMenu = styled.div`
    display: flex;
    align-items: flex-end;
    gap: 15px;
    height: 43px;
    padding: 0 0 3px 12px;
`
const ChannelBox = styled.div`
    flex: 728 1 0;
    margin-left: 5px;
    background: #2b2b2b;
`
const Handle = styled.div`
    width: 67px;
    height: 3px;
    margin: 2px 0 8px auto;
    background-image: radial-gradient(#888 1px, transparent 1px);
    background-size: 3px 3px;
`
const LayerTabs = styled.div`
    display: flex;
    height: 18px;
    margin-left: 5px;
    background: #393939;

    & button {
        padding: 0 11px 0 10px;
        border: 1px solid #323232;
        border-bottom: 0;
        border-radius: 3px 3px 0 0;
    }
`
const LayerMenu = styled.div`
    display: flex;
    gap: 14px;
    height: 46px;
    padding: 1px 0 0 14px;
    align-items: flex-start;
`
const LayerBox = styled.div`
    flex: 227 1 0;
    margin-left: 8px;
    background: #2b2b2b;
`
const WindowFrame = styled.section`
    position: absolute;
    left: 254px;
    top: 300px;
    display: flex;
    flex-direction: column;
    width: 966px;
    height: 576px;
    background: #444;
    box-shadow: 0 3px 14px 2px rgba(0, 0, 0, 0.45);
`
const TitleBar = styled.div`
    display: flex;
    align-items: center;
    height: 30px;
    padding-left: 8px;
    background: #fff;
    color: #000;

    & span {
        flex: 1;
        margin-left: 5px;
        font-size: 12px;
    }
`
const WindowButton = styled.button`
    display: flex;
    align-items: center;
    justify-content: center;
    width: 46px;
    height: 30px;
`
const WindowMenu = styled.div`
    display: flex;
    align-items: center;
    gap: 23px;
    height: 19px;
    padding: 0 14px;

    & u {
        text-underline-offset: 2px;
    }
`
const WindowTools = styled.div`
    display: flex;
    height: 31px;
    border: 1px solid #000;
`
const ToolSection = styled.div`
    display: flex;
    align-items: center;
    flex: ${ p => p.$grow ? "1" : "none" };
    min-width: 0;
    padding-left: 1px;

    &:not(:first-of-type) {
        border-left: 2px solid #000;
    }
`
const Grip = styled.span`
    flex: none;
    width: 6px;
    height: 18px;
    margin-right: 2px;
    background-image: radial-gradient(#999 1px, transparent 1px);
    background-size: 3px 3px;
`
const ItTool = styled.button`
    display: flex;
    align-items: center;
    justify-content: center;
    width: 28px;
    height: 26px;
    margin-right: 1px;
    border: 1px solid #3c3c3c;
    border-radius: 3px;
    color: #e4e4e4;
    font-family: Inter, sans-serif;
    font-size: 14px;
    font-weight: 900;
`
const ToolGap = styled.span`
    width: 6px;
`
const LevelLabel = styled.label`
    margin: 0 3px 0 13px;
    font-size: 10px;
`
const Spin = styled.div`
    display: flex;
    width: 60px;
    height: 19px;
    margin-right: 2px;
    border: 1px solid #373737;
    border-radius: 2px;

    & input {
        flex: 1;
        min-width: 0;
        padding: 0 3px;
        color: #6c6c6c;
        font-family: "Liberation Mono", monospace;
        font-size: 10px;
    }

    & button {
        display: flex;
        align-items: center;
        justify-content: center;
        width: 13px;
        background: #5a5a5a;
    }
`
const Slider = styled.input`
    appearance: none;
    flex: 1;
    min-width: 0;
    height: 14px;

    &::-webkit-slider-runnable-track {
        height: 4px;
        background: linear-gradient(to right, #2a8ee0 ${ p => p.$fill }%, #373737 ${ p => p.$fill }%);
    }

    &::-webkit-slider-thumb {
        appearance: none;
        width: 12px;
        height: 12px;
        margin-top: -4px;
        border: 1px solid #333;
        border-radius: 2px;
        background: #6a6a6a;
    }
`
const ResetButton = styled.button`
    margin: 0 3px;
`
const WindowBody = styled.div`
    display: flex;
    flex: 1;
    min-height: 0;
`
const CatalogDock = styled.div`
    position: relative;
    display: flex;
    flex-direction: column;
    width: 117px;
`
const CatalogHead = styled.div`
    display: flex;
    align-items: center;
    justify-content: space-between;
    height: 19px;
    padding: 0 8px 0 23px;
`
const CatalogList = styled.div`
    display: flex;
    flex: 1;
    flex-direction: column;
    justify-content: space-between;
    width: 111px;
    padding: 0 0 4px 2px;
    border: 1px solid #393939;
    border-width: 1px 1px 0 0;
`
const CatalogItem = styled.div`
    display: flex;
    align-items: center;
    gap: 8px;
    height: 20px;
    padding-left: 10px;
`
const CatalogScroll = styled.div`
    width: 100px;
    height: 7px;
    background: #6b6b6b;
`
const DockHandle = styled.span`
    position: absolute;
    right: 1px;
    top: 49%;
    width: 3px;
    height: 18px;
    background-image: radial-gradient(#999 1px, transparent 1px);
    background-size: 3px 3px;
`
const Checkerboard = styled.div`
    flex: 1;
    background: repeating-conic-gradient(#333 0 25%, #191919 0 50%) 0 0 / 20px 20px;
`
const StatusBar = styled.footer`
    display: flex;
    align-items: center;
    height: 19px;
    padding-left: 1px;
    border: 1px solid #000;
`
const Channel = styled.span`
    width: 51px;
    color: #000;
    font-family: Inter, sans-serif;
    font-size: 14px;
    font-weight: 900;
`
const StatusSelect = styled.select`
    appearance: none;
    width: 100%;
    height: 16px;
    padding-left: 5px;
    border: 1px solid #3a3a3a;
    font-family: "Liberation Mono", monospace;
    font-size: 10px;
`
const Swatch = styled.span`
    width: 10px;
    height: 10px;
    margin-left: 16px;
    background: linear-gradient(#70006e 60%, #1a0018 60%);
`
const Scribble = styled.svg`
    position: absolute;
    left: 0;
    top: 0;
    fill: none;
    stroke: #e01010;
    stroke-width: 2;
    stroke-linecap: round;
    pointer-events: none;
`

export default App;
